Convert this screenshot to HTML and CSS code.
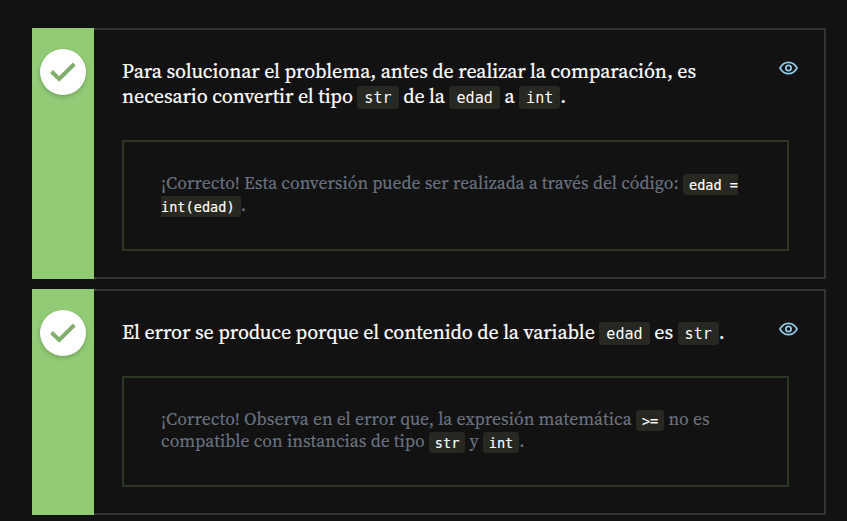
FILE: index.html
```html
<!DOCTYPE html>
<html lang="es">
<head>
<meta charset="utf-8">
<title>Respuestas</title>
<link rel="stylesheet" href="styles.css">
</head>
<body>
<main class="answers">
  <article class="card">
    <div class="status"><span class="badge"><svg viewBox="0 0 26 20" width="26" height="20"><path d="M1.5 9.5 9.2 17 24.3 2"/></svg></span></div>
    <div class="content">
      <header class="heading">
        <p class="statement">Para solucionar el problema, antes de realizar la comparación, es<br>necesario convertir el tipo <code>str</code> de la <code>edad</code> a <code>int</code>.</p>
        <svg class="eye" viewBox="0 0 20 14" width="19" height="14"><path d="M1 7C3 3.3 6 1 10 1s7 2.3 9 6c-2 3.7-5 6-9 6S3 10.7 1 7Z"/><circle cx="10" cy="7" r="2.8"/></svg>
      </header>
      <div class="feedback"><p>¡Correcto! Esta conversión puede ser realizada a través del código: <code>edad =<br>int(edad)</code>.</p></div>
    </div>
  </article>
  <article class="card">
    <div class="status"><span class="badge"><svg viewBox="0 0 26 20" width="26" height="20"><path d="M1.5 9.5 9.2 17 24.3 2"/></svg></span></div>
    <div class="content">
      <header class="heading">
        <p class="statement">El error se produce porque el contenido de la variable <code>edad</code> es <code>str</code>.</p>
        <svg class="eye" viewBox="0 0 20 14" width="19" height="14"><path d="M1 7C3 3.3 6 1 10 1s7 2.3 9 6c-2 3.7-5 6-9 6S3 10.7 1 7Z"/><circle cx="10" cy="7" r="2.8"/></svg>
      </header>
      <div class="feedback"><p>¡Correcto! Observa en el error que, la expresión matemática <code>&gt;=</code> no es<br>compatible con instancias de tipo <code>str</code> y <code>int</code>.</p></div>
    </div>
  </article>
</main>
</body>
</html>
```
FILE: styles.css
```css
* { box-sizing: border-box; }
body { margin: 0; background: #121212; font-family: "Source Serif Pro", "Source Serif 4", "Liberation Serif", serif; }
.answers { display: flex; flex-direction: column; gap: 10px; padding: 28px 21px 6px 32px; }
.card { display: flex; height: 251px; }
.card + .card { height: 226px; }
.status { width: 62px; flex: none; background: #91cb75; padding: 21px 8px; }
.badge { display: flex; align-items: center; justify-content: center; width: 46px; height: 46px; border-radius: 50%; background: #fff; box-shadow: 0 2px 4px rgba(0,0,0,.2); }
.badge path { fill: none; stroke: #82ae6e; stroke-width: 4; }
.content { flex: 1; min-width: 0; border: 2px solid #333; border-left: 0; padding: 29px 35px 26px 28px; display: flex; flex-direction: column; justify-content: space-between; }
.heading { display: flex; justify-content: space-between; }
p { margin: 0; white-space: nowrap; }
.statement { font-size: 20px; line-height: 25px; color: #fff; letter-spacing: -.09px; -webkit-text-stroke: .2px #fff; }
.eye { margin: 2px -9px 0 0; flex: none; fill: none; stroke: #8ecae6; stroke-width: 1.8; }
.feedback { height: 111px; border: 2px solid #2b3624; padding: 30px 37px; }
.feedback p { font-size: 17.6px; line-height: 22px; color: #6b7280; letter-spacing: .04px; -webkit-text-stroke: .15px #6b7280; }
code { font-family: "DejaVu Sans Mono", monospace; font-size: 15.1px; letter-spacing: 0; line-height: 1; color: #fff; background: #272822; border-radius: 3px; padding: 3px 7px 2px; -webkit-text-stroke: 0; }
.feedback code { position: relative; top: 1px; font-size: 13.6px; padding: 3px 6px 2px; -webkit-text-stroke: .15px #fff; }
```
